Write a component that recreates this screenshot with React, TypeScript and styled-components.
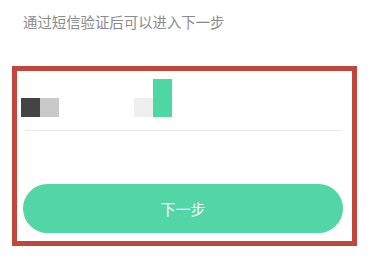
import styled, { createGlobalStyle } from "styled-components";

const GlobalStyle = createGlobalStyle`
  body {
    margin: 0;
    background: #fff;
    font-family: "Noto Sans CJK SC", "Noto Sans", sans-serif;
  }
`;

function App() {
  return (
    <>
      <GlobalStyle />
      <Page>
        <Hint>通过短信验证后可以进入下一步</Hint>
        <Frame>
          <InputRow>
            <Block tone="#444444" />
            <Block tone="#c9c9c9" />
            <Spacer />
            <Block tone="#efefef" />
            <Block tone="#4fd6a5" tall />
          </InputRow>
          <Divider />
          <NextButton>下一步</NextButton>
        </Frame>
      </Page>
    </>
  );
}

const Page = styled.div`
  width: 383px;
  height: 265px;
  padding: 12px 0 0 12px;
  box-sizing: border-box;
  overflow: hidden;
`;

const Hint = styled.p`
  margin: 0 0 0 11px;
  font-size: 14.4px;
  line-height: 20px;
  color: #8a8a8a;
`;

const Frame = styled.div`
  margin-top: 34px;
  width: 345px;
  height: 180px;
  box-sizing: border-box;
  border: 5px solid #c0473d;
  display: flex;
  flex-direction: column;
`;

const InputRow = styled.div`
  display: flex;
  align-items: flex-end;
  padding: 8px 0 0 4px;
`;

const Block = styled.div<{ tone: string; tall?: boolean }>`
  width: 19px;
  height: ${(p) => (p.tall ? "38px" : "19px")};
  background: ${(p) => p.tone};
`;

const Spacer = styled.div`
  width: 75px;
`;

const Divider = styled.div`
  margin: 13px 0 0 8px;
  width: 316px;
  height: 1px;
  background: #ebebeb;
`;

const NextButton = styled.button`
  margin: 53px 0 0 6px;
  width: 320px;
  height: 49px;
  border: none;
  border-radius: 25px;
  background: #52d6a5;
  color: #fff;
  font-family: "Noto Sans CJK SC", sans-serif;
  font-size: 15px;
  cursor: pointer;
`;

export default App;
